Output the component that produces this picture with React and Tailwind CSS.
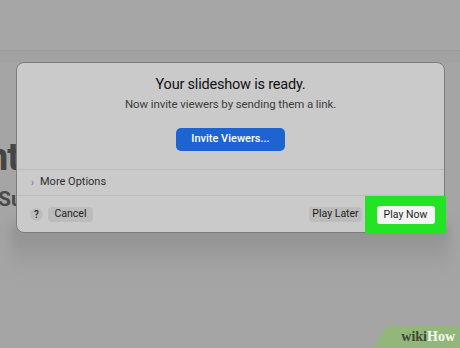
export default function App() {
  return (
    <div
      className="relative h-[348px] w-[460px] overflow-hidden bg-[#a5a5a5]"
      style={{ fontFamily: "Roboto, 'Liberation Sans', sans-serif" }}
    >
      {/* page behind the sheet */}
      <div className="h-[50px] bg-[#a6a6a6]" />
      <div className="h-[12px] border-t border-[#9c9c9c] bg-[#a2a2a2]" />
      <div className="pt-[75px]">
        <div className="-ml-[13px] text-[38px] leading-[40px] font-bold tracking-[-1px] text-[#454545]">
          nt
        </div>
        <div className="-ml-[2px] mt-[11px] text-[21px] leading-[22px] font-bold text-[#4a4a4a]">
          Su
        </div>
      </div>

      {/* shadow under sheet */}
      <div className="absolute left-[10px] top-[225px] h-[50px] w-[440px] bg-gradient-to-b from-[#8f8f8f] to-[#a5a5a5] blur-[6px]" />

      {/* sheet */}
      <div className="absolute left-[16px] top-[62px] flex h-[171px] w-[429px] flex-col rounded-[8px] border border-[#7c7c7c] bg-[#cacaca]">
        <div className="flex flex-col items-center pt-[12px]">
          <div className="text-[14.5px] leading-[20px] tracking-[-0.2px] text-[#111]">
            Your slideshow is ready.
          </div>
          <div className="mt-[1px] text-[11.5px] leading-[16px] tracking-[-0.1px] text-[#3d3d3d]">
            Now invite viewers by sending them a link.
          </div>
          <button className="mt-[16px] flex h-[23px] w-[109px] items-center justify-center rounded-[5px] bg-[#1d64d2] text-[11px] font-medium text-white">
            Invite Viewers...
          </button>
        </div>

        <div className="mt-[18px] border-t border-[#bcbcbc]" />
        <div className="flex h-[30px] items-center pl-[14px]">
          <span className="text-[10px] text-[#777]">›</span>
          <span className="ml-[6px] text-[11px] text-[#2e2e2e]">More Options</span>
        </div>
        <div className="border-t border-[#bcbcbc]" />

        <div className="flex flex-1 items-center pl-[13px]">
          <div className="flex h-[13px] w-[13px] items-center justify-center rounded-full bg-[#bdbdbd] text-[10px] font-medium text-[#222]">
            ?
          </div>
          <button className="ml-[5px] flex h-[15px] w-[45px] items-center justify-center rounded-[4px] bg-[#bcbcbc] text-[10.5px] text-[#1e1e1e]">
            Cancel
          </button>
          <button className="ml-auto flex h-[15px] w-[53px] items-center justify-center rounded-[4px] bg-[#bcbcbc] text-[10.5px] text-[#1e1e1e]">
            Play Later
          </button>
          <div className="-mb-[1px] -mr-[2px] ml-[3px] flex h-[37px] w-[81px] items-center justify-center self-end bg-[#24e324]">
            <button className="flex h-[18px] w-[58px] items-center justify-center rounded-[3px] bg-[#f3f3f3] text-[10.5px] text-[#1e1e1e]">
              Play Now
            </button>
          </div>
        </div>
      </div>

      {/* watermark */}
      <div className="absolute bottom-0 right-0 flex h-[22px] w-[87px] items-center justify-end pr-[5px] bg-[#93b77b] [clip-path:polygon(16%_0,100%_0,100%_100%,0_100%)]">
        <span
          className="text-[14px] font-bold leading-none"
          style={{ fontFamily: "'Liberation Serif', serif" }}
        >
          <span className="text-[#3f4a36]">wiki</span>
          <span className="text-[#f4f7f0]">How</span>
        </span>
      </div>
    </div>
  );
}
